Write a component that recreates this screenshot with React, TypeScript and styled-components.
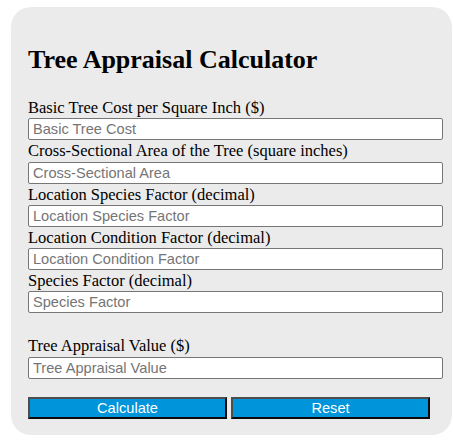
import styled, { createGlobalStyle } from "styled-components";

const GlobalStyle = createGlobalStyle`
  html, body {
    margin: 0;
    padding: 0;
    background: #ffffff;
  }
  body {
    font-family: "Liberation Serif", "Times New Roman", serif;
  }
`;

const Page = styled.div`
  padding: 7px 0 0 11px;
`;

const Card = styled.form`
  width: 415px;
  padding: 39px 9px 16px 17px;
  background: #ebebeb;
  border-radius: 20px;
`;

const Title = styled.h2`
  margin: 0 0 26px;
  font-size: 26px;
  line-height: 27px;
  font-weight: bold;
  color: #000;
`;

const Label = styled.label`
  display: block;
  font-size: 16.5px;
  line-height: 18.25px;
  color: #000;
`;

const Input = styled.input`
  display: block;
  box-sizing: border-box;
  width: 100%;
  height: 22px;
  margin: 1px 0 2px;
  padding: 1px 4px;
  border: 1px solid #767676;
  border-radius: 2px;
  background: #fff;
  font-family: "Liberation Sans", Arial, sans-serif;
  font-size: 14.6px;
  color: #000;
  outline: none;
  &::placeholder {
    color: #757575;
  }
`;

const Spacer = styled.div`
  height: 22px;
`;

const Buttons = styled.div`
  display: flex;
  gap: 4px;
  margin-top: 18px;
`;

const Button = styled.button`
  box-sizing: border-box;
  width: 199px;
  height: 22px;
  padding: 0;
  border: 2px solid;
  border-color: #4d4d4d #0a0a0a #0a0a0a #4d4d4d;
  background: #0095db;
  color: #fff;
  font-family: "Liberation Sans", Arial, sans-serif;
  font-size: 14.6px;
  line-height: 18px;
  cursor: pointer;
`;

const fields = [
  { label: "Basic Tree Cost per Square Inch ($)", placeholder: "Basic Tree Cost" },
  { label: "Cross-Sectional Area of the Tree (square inches)", placeholder: "Cross-Sectional Area" },
  { label: "Location Species Factor (decimal)", placeholder: "Location Species Factor" },
  { label: "Location Condition Factor (decimal)", placeholder: "Location Condition Factor" },
  { label: "Species Factor (decimal)", placeholder: "Species Factor" },
];

export default function App() {
  return (
    <>
      <GlobalStyle />
      <Page>
        <Card onSubmit={(e) => e.preventDefault()}>
          <Title>Tree Appraisal Calculator</Title>
          {fields.map((f) => (
            <div key={f.placeholder}>
              <Label>{f.label}</Label>
              <Input type="text" placeholder={f.placeholder} />
            </div>
          ))}
          <Spacer />
          <Label>Tree Appraisal Value ($)</Label>
          <Input type="text" placeholder="Tree Appraisal Value" readOnly />
          <Buttons>
            <Button type="button">Calculate</Button>
            <Button type="reset">Reset</Button>
          </Buttons>
        </Card>
      </Page>
    </>
  );
}
